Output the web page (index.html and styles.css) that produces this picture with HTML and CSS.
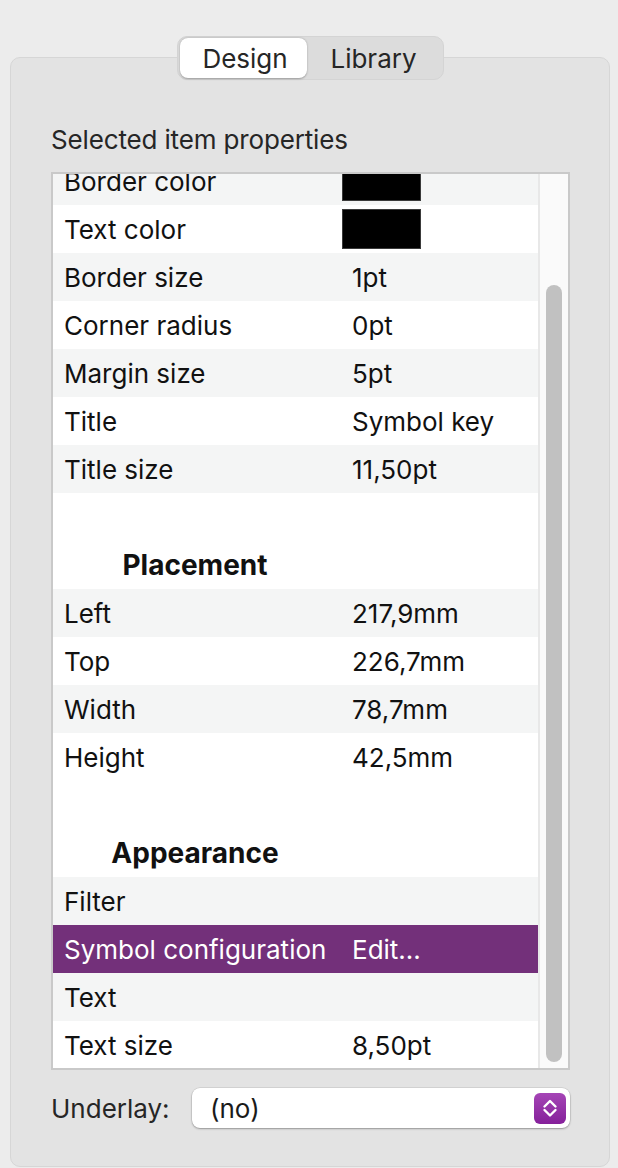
FILE: index.html
```html
<!DOCTYPE html>
<html lang="en">
<head>
    <meta charset="UTF-8">
    <meta name="viewport" content="width=device-width, initial-scale=1.0">
    <title>Inspector</title>
    <link rel="stylesheet" href="styles.css">
</head>
<body>
    <div class="tabs">
        <div class="segmented">
            <div class="segment active">Design</div>
            <div class="segment">Library</div>
        </div>
    </div>

    <div class="panel">
        <p class="panel-title">Selected item properties</p>

        <div class="table">
            <div class="rows">
                <div class="rows-inner">
                    <div class="row alt"><span class="label">Border color</span><span class="value"><span class="swatch"></span></span></div>
                    <div class="row"><span class="label">Text color</span><span class="value"><span class="swatch"></span></span></div>
                    <div class="row alt"><span class="label">Border size</span><span class="value">1pt</span></div>
                    <div class="row"><span class="label">Corner radius</span><span class="value">0pt</span></div>
                    <div class="row alt"><span class="label">Margin size</span><span class="value">5pt</span></div>
                    <div class="row"><span class="label">Title</span><span class="value">Symbol key</span></div>
                    <div class="row alt"><span class="label">Title size</span><span class="value">11,50pt</span></div>

                    <div class="section"><span class="section-name">Placement</span></div>
                    <div class="row alt"><span class="label">Left</span><span class="value">217,9mm</span></div>
                    <div class="row"><span class="label">Top</span><span class="value">226,7mm</span></div>
                    <div class="row alt"><span class="label">Width</span><span class="value">78,7mm</span></div>
                    <div class="row"><span class="label">Height</span><span class="value">42,5mm</span></div>

                    <div class="section"><span class="section-name">Appearance</span></div>
                    <div class="row alt"><span class="label">Filter</span><span class="value"></span></div>
                    <div class="row selected"><span class="label">Symbol configuration</span><span class="value">Edit...</span></div>
                    <div class="row alt"><span class="label">Text</span><span class="value"></span></div>
                    <div class="row"><span class="label">Text size</span><span class="value">8,50pt</span></div>
                </div>
            </div>
            <div class="scroll-track">
                <div class="scroll-thumb"></div>
            </div>
        </div>

        <div class="underlay">
            <span class="underlay-label">Underlay:</span>
            <div class="select">
                <span class="select-value">(no)</span>
                <span class="stepper">
                    <svg width="18" height="24" viewBox="0 0 18 24" fill="none" stroke="#fff" stroke-width="2.4" stroke-linecap="round" stroke-linejoin="round">
                        <path d="M3.5 10.5 L9 5 L14.5 10.5"/>
                        <path d="M3.5 14 L9 19.5 L14.5 14"/>
                    </svg>
                </span>
            </div>
        </div>
    </div>
</body>
</html>
```

FILE: styles.css
```css
* {
    margin: 0;
    padding: 0;
    box-sizing: border-box;
}

body {
    font-family: Inter, 'Noto Sans', sans-serif;
    background-color: #ececec;
    color: #1a1a1a;
    width: 618px;
    height: 1168px;
    overflow: hidden;
}

.tabs {
    display: flex;
    justify-content: center;
    padding-top: 36px;
    padding-left: 2px;
    position: relative;
    z-index: 2;
}

.segmented {
    display: flex;
    height: 44px;
    padding: 1px 2px;
    background-color: #dcdcdc;
    border: 1px solid #d4d4d4;
    border-radius: 10px;
}

.segment {
    display: flex;
    align-items: center;
    justify-content: center;
    font-size: 26px;
    color: #262626;
}

.segment:first-child {
    width: 127px;
    padding-left: 4px;
}

.segment:last-child {
    width: 134px;
}

.segment.active {
    background-color: #fff;
    border-radius: 8px;
    box-shadow: 0 0.5px 2px rgba(0, 0, 0, 0.3);
}

.panel {
    margin: -23px 8px 0 10px;
    height: 1110px;
    background-color: #e3e3e3;
    border: 1px solid #d6d6d6;
    border-radius: 10px;
    padding: 0 39px 0 40px;
}

.panel-title {
    margin-top: 67px;
    font-size: 26px;
    line-height: 30px;
    letter-spacing: -0.15px;
    color: #262626;
    margin-bottom: 17px;
}

.table {
    display: flex;
    height: 898px;
    border: 2px solid #c9c9c9;
    background-color: #fff;
}

.rows {
    flex: 1;
    overflow: hidden;
}

.rows-inner {
    margin-top: -17px;
}

.row {
    display: flex;
    align-items: center;
    height: 48px;
    font-size: 26px;
    color: #111;
    background-color: #fff;
}

.row.alt {
    background-color: #f4f5f5;
}

.row.selected {
    background-color: #73307a;
    color: #fff;
}

.label {
    width: 299px;
    padding-left: 11px;
}

.value {
    flex: 1;
    display: flex;
    align-items: center;
}

.swatch {
    display: block;
    width: 79px;
    height: 40px;
    margin-left: -10px;
    background-color: #000;
    border: 1px solid #3a3a3a;
}

.section {
    display: flex;
    align-items: center;
    height: 96px;
    padding-top: 48px;
    background-color: #fff;
}

.section-name {
    width: 284px;
    text-align: center;
    font-size: 28px;
    font-weight: 700;
    color: #111;
}

.scroll-track {
    width: 30px;
    display: flex;
    padding: 111px 6px 6px 6px;
    background-color: #fafafa;
    border-left: 2px solid #e8e8e8;
}

.scroll-thumb {
    flex: 1;
    background-color: #c1c1c1;
    border-radius: 8px;
}

.underlay {
    display: flex;
    align-items: center;
    margin-top: 18px;
}

.underlay-label {
    width: 141px;
    font-size: 26px;
    color: #262626;
}

.select {
    flex: 1;
    display: flex;
    align-items: center;
    justify-content: space-between;
    height: 40px;
    padding: 0 4px 0 18px;
    background-color: #fff;
    border-radius: 8px;
    box-shadow: 0 0 0 0.5px rgba(0, 0, 0, 0.12), 0 1px 2px rgba(0, 0, 0, 0.3);
}

.select-value {
    font-size: 26px;
    color: #1a1a1a;
}

.stepper {
    display: flex;
    align-items: center;
    justify-content: center;
    width: 32px;
    height: 31px;
    border-radius: 6px;
    background: linear-gradient(#a545b6, #85209a);
}
```
